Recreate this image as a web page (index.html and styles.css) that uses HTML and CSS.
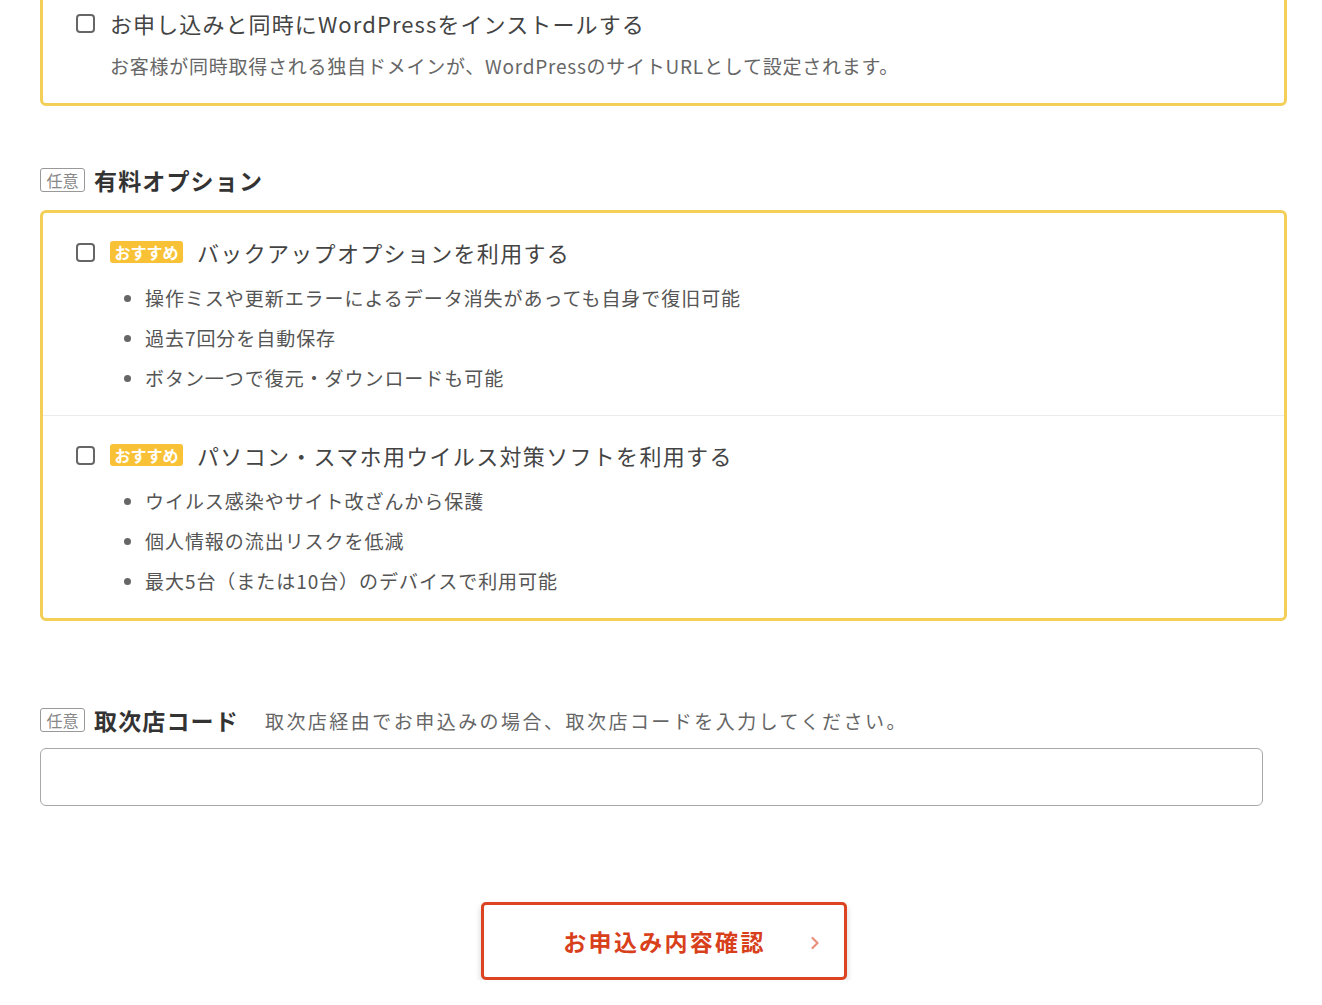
FILE: index.html
```html
<!DOCTYPE html>
<html lang="ja">
<head>
<meta charset="utf-8">
<link rel="stylesheet" href="styles.css">
</head>
<body>
<div class="page">
  <div class="box box-top">
    <div class="row">
      <label class="row-head">
        <span class="check"></span>
        <span class="label">お申し込みと同時にWordPressをインストールする</span>
      </label>
      <p class="sub">お客様が同時取得される独自ドメインが、WordPressのサイトURLとして設定されます。</p>
    </div>
  </div>

  <div class="section-head section-options">
    <span class="opt-tag">任意</span>
    <h2 class="section-title">有料オプション</h2>
  </div>

  <div class="box">
    <div class="row">
      <label class="row-head">
        <span class="check"></span>
        <span class="rec-tag">おすすめ</span>
        <span class="label">バックアップオプションを利用する</span>
      </label>
      <ul class="bullets">
        <li>操作ミスや更新エラーによるデータ消失があっても自身で復旧可能</li>
        <li>過去7回分を自動保存</li>
        <li>ボタン一つで復元・ダウンロードも可能</li>
      </ul>
    </div>
    <div class="row row-divided">
      <label class="row-head">
        <span class="check"></span>
        <span class="rec-tag">おすすめ</span>
        <span class="label">パソコン・スマホ用ウイルス対策ソフトを利用する</span>
      </label>
      <ul class="bullets">
        <li>ウイルス感染やサイト改ざんから保護</li>
        <li>個人情報の流出リスクを低減</li>
        <li>最大5台（または10台）のデバイスで利用可能</li>
      </ul>
    </div>
  </div>

  <div class="section-head section-agent">
    <span class="opt-tag">任意</span>
    <h2 class="section-title">取次店コード</h2>
    <span class="section-desc">取次店経由でお申込みの場合、取次店コードを入力してください。</span>
  </div>
  <input class="code-input" type="text">

  <div class="actions">
    <button class="confirm-btn" type="button">
      <span class="btn-text">お申込み内容確認</span>
      <svg class="chev" width="10" height="14" viewBox="0 0 10 14"><path d="M2.5 2 L7.5 7 L2.5 12" fill="none" stroke="currentColor" stroke-width="2.2" stroke-linecap="round" stroke-linejoin="round"/></svg>
    </button>
  </div>
</div>
</body>
</html>
```

FILE: styles.css
```css
* { box-sizing: border-box; }
html, body { margin: 0; padding: 0; background: #fff; }
body {
  font-family: "Noto Sans CJK JP", "Noto Sans", sans-serif;
  color: #444;
}
.page {
  width: 1247px;
  margin-left: 40px;
}
.box {
  border: 3px solid #f3cf58;
  border-radius: 6px;
}
.box-top {
  margin-top: -19px;
}
.row {
  padding: 23px 33px 17px;
}
.box-top .row { padding-bottom: 21px; }
.row-divided {
  border-top: 1px solid #ebebeb;
}
.row-head {
  display: flex;
  align-items: center;
  height: 32px;
}
.check {
  width: 19px;
  height: 19px;
  border: 2px solid #666;
  border-radius: 4px;
  flex: none;
  margin-right: 15px;
  background: #fff;
}
.label {
  font-size: 22px;
  letter-spacing: 0.06em;
  line-height: 32px;
  color: #444;
}
.box-top .label { letter-spacing: 0.05em; }
.sub {
  margin: 11px 0 0 34px;
  font-size: 19px;
  line-height: 32px;
  letter-spacing: 0.04em;
  color: #666;
}
.rec-tag {
  display: inline-flex;
  align-items: center;
  justify-content: center;
  height: 22px;
  width: 73px;
  margin-right: 14px;
  background: #f9c236;
  color: #fff;
  font-size: 16px;
  font-weight: 700;
  border-radius: 3px;
  letter-spacing: 0;
}
.bullets {
  list-style: none;
  margin: 10px 0 0 0;
  padding: 0 0 0 48px;
}
.bullets li {
  position: relative;
  font-size: 19px;
  line-height: 40px;
  letter-spacing: 0.05em;
  color: #555;
  padding-left: 21px;
}
.bullets li::before {
  content: "";
  position: absolute;
  left: 0;
  top: 17px;
  width: 7px;
  height: 7px;
  border-radius: 50%;
  background: #666;
}
.section-head {
  display: flex;
  align-items: center;
  height: 32px;
}
.section-options {
  margin-top: 58px;
  margin-bottom: 14px;
}
.section-agent {
  margin-top: 83px;
  margin-bottom: 12px;
}
.opt-tag {
  display: inline-flex;
  align-items: center;
  justify-content: center;
  width: 45px;
  height: 24px;
  border: 1px solid #999;
  border-radius: 3px;
  color: #888;
  font-size: 16px;
  margin-right: 9px;
  flex: none;
}
.section-title {
  margin: 0;
  font-size: 23px;
  font-weight: 700;
  letter-spacing: 0.05em;
  color: #333;
  line-height: 32px;
}
.section-desc {
  margin-left: 26px;
  font-size: 19px;
  letter-spacing: 0.13em;
  color: #666;
}
.code-input {
  display: block;
  width: 1223px;
  height: 58px;
  border: 1px solid #a8a8a8;
  border-radius: 6px;
  background: #fff;
  font-size: 18px;
  padding: 0 14px;
  outline: none;
}
.actions {
  display: flex;
  justify-content: center;
  margin-top: 96px;
}
.confirm-btn {
  position: relative;
  width: 366px;
  height: 78px;
  border: 3px solid #dc4320;
  border-radius: 5px;
  background: #fff;
  box-shadow: 0 3px 6px rgba(0,0,0,0.18);
  display: flex;
  align-items: center;
  justify-content: center;
  font-family: inherit;
  padding: 0;
  cursor: pointer;
}
.btn-text {
  font-size: 23px;
  font-weight: 700;
  letter-spacing: 0.1em;
  color: #d8401c;
  margin-left: 2px;
}
.chev {
  position: absolute;
  left: 326px;
  top: 31px;
  color: #e8907c;
}
```
